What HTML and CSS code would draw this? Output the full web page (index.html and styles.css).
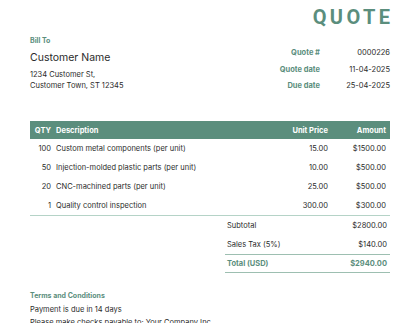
FILE: index.html
```html
<!DOCTYPE html>
<html>
<head>
<meta charset="utf-8">
<link rel="stylesheet" href="styles.css">
</head>
<body>
<div class="page">
  <div class="title-row"><h1 class="title">QUOTE</h1></div>
  <div class="head">
    <div class="bill">
      <div class="label">Bill To</div>
      <div class="cust-name">Customer Name</div>
      <div class="addr">1234 Customer St,</div>
      <div class="addr">Customer Town, ST 12345</div>
    </div>
    <div class="meta">
      <div class="meta-row"><span class="meta-label">Quote #</span><span class="meta-val">0000226</span></div>
      <div class="meta-row"><span class="meta-label">Quote date</span><span class="meta-val">11-04-2025</span></div>
      <div class="meta-row"><span class="meta-label">Due date</span><span class="meta-val">25-04-2025</span></div>
    </div>
  </div>
  <table class="items">
    <thead>
      <tr><th class="c-qty">QTY</th><th class="c-desc">Description</th><th class="c-price">Unit Price</th><th class="c-amt">Amount</th></tr>
    </thead>
    <tbody>
      <tr><td class="c-qty">100</td><td class="c-desc">Custom metal components (per unit)</td><td class="c-price">15.00</td><td class="c-amt">$1500.00</td></tr>
      <tr><td class="c-qty">50</td><td class="c-desc">Injection-molded plastic parts (per unit)</td><td class="c-price">10.00</td><td class="c-amt">$500.00</td></tr>
      <tr><td class="c-qty">20</td><td class="c-desc">CNC-machined parts (per unit)</td><td class="c-price">25.00</td><td class="c-amt">$500.00</td></tr>
      <tr><td class="c-qty">1</td><td class="c-desc">Quality control inspection</td><td class="c-price">300.00</td><td class="c-amt">$300.00</td></tr>
    </tbody>
  </table>
  <div class="totals-wrap">
    <div class="totals">
      <div class="t-row"><span>Subtotal</span><span>$2800.00</span></div>
      <div class="t-row"><span>Sales Tax (5%)</span><span>$140.00</span></div>
      <div class="t-row t-total"><span>Total (USD)</span><span>$2940.00</span></div>
    </div>
  </div>
  <div class="terms">
    <div class="label">Terms and Conditions</div>
    <div class="t-line">Payment is due in 14 days</div>
    <div class="t-line">Please make checks payable to: Your Company Inc.</div>
  </div>
</div>
</body>
</html>
```
FILE: styles.css
```css
* { box-sizing: border-box; }
body {
  margin: 0;
  background: #fff;
  font-family: Inter, "Noto Sans", sans-serif;
  color: #2b2b2b;
}
.page {
  padding: 5px 30px 0 30px;
  width: 420px;
}
.title-row {
  display: flex;
  justify-content: flex-end;
}
.title {
  margin: 0;
  font-family: Roboto, sans-serif;
  font-weight: 700;
  font-size: 20px;
  letter-spacing: 3.4px;
  margin-right: -3.4px;
  color: #5b8e7d;
  line-height: 25px;
}
.head {
  display: flex;
  justify-content: space-between;
  margin-top: 6px;
}
.label {
  font-size: 7px;
  font-weight: 700;
  color: #5b8e7d;
  line-height: 10px;
}
.cust-name {
  font-size: 10.5px;
  margin-top: 5px;
  line-height: 14px;
}
.bill .cust-name + .addr { margin-top: 4px; }
.addr {
  font-size: 7.5px;
  line-height: 11px;
}
.meta {
  display: flex;
  flex-direction: column;
  gap: 5.5px;
  padding-top: 11px;
}
.meta-row {
  display: flex;
  font-size: 7.5px;
  line-height: 11px;
}
.meta-label {
  width: 80px;
  text-align: right;
  color: #5b8e7d;
  font-weight: 700;
}
.meta-val {
  width: 70px;
  text-align: right;
}
.items {
  width: 100%;
  border-collapse: collapse;
  margin-top: 30px;
  font-size: 7.5px;
}
.items th {
  background: #5b8e7d;
  color: #fff;
  font-weight: 700;
  height: 18px;
  padding: 0 4px;
}
.items td {
  height: 19px;
  padding: 0 4px;
}
.items tbody tr:last-child td { border-bottom: 1px solid #b5d3c7; }
.c-qty { text-align: right; width: 25px; }
.c-desc { text-align: left; padding-left: 1px !important; }
.c-price { text-align: right; width: 80px; }
.c-amt { text-align: right; width: 58px; }
.totals-wrap {
  display: flex;
  justify-content: flex-end;
}
.totals {
  width: 165px;
  font-size: 7.5px;
}
.t-row {
  display: flex;
  justify-content: space-between;
  height: 19px;
  align-items: center;
  padding: 0 3px 0 2px;
}
.t-total {
  color: #5b8e7d;
  font-weight: 700;
  border-top: 1px solid #9dbfb1;
  border-bottom: 1px solid #9dbfb1;
}
.terms {
  margin-top: 18px;
}
.t-line {
  font-size: 7.5px;
  line-height: 13px;
}
.terms .label { margin-bottom: 2px; }
```
